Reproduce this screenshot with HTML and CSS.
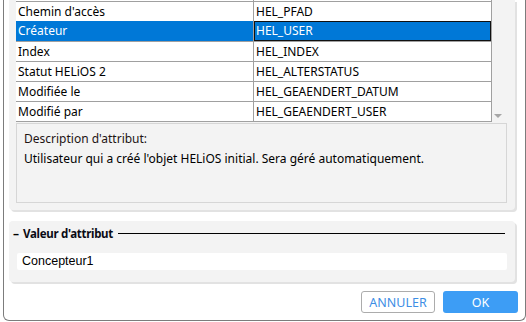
FILE: index.html
```html
<!DOCTYPE html>
<html lang="fr">
<head>
    <meta charset="UTF-8">
    <title>Attribut</title>
    <link rel="stylesheet" href="styles.css">
</head>
<body>
    <div class="window">
        <div class="panel panel-list">
            <div class="list-area">
                <div class="grid">
                    <div class="row row-cut"><span class="cell name"></span><span class="cell field"></span></div>
                    <div class="row"><span class="cell name">Chemin d'accès</span><span class="cell field">HEL_PFAD</span></div>
                    <div class="row selected"><span class="cell name">Créateur</span><span class="cell field">HEL_USER</span></div>
                    <div class="row"><span class="cell name">Index</span><span class="cell field">HEL_INDEX</span></div>
                    <div class="row"><span class="cell name">Statut HELiOS 2</span><span class="cell field">HEL_ALTERSTATUS</span></div>
                    <div class="row"><span class="cell name">Modifiée le</span><span class="cell field">HEL_GEAENDERT_DATUM</span></div>
                    <div class="row"><span class="cell name">Modifié par</span><span class="cell field">HEL_GEAENDERT_USER</span></div>
                </div>
                <div class="scrollbar">
                    <span class="arrow-down"></span>
                </div>
            </div>
            <div class="description">
                <p class="desc-title">Description d'attribut:</p>
                <p class="desc-text">Utilisateur qui a créé l'objet HELiOS initial. Sera géré automatiquement.</p>
            </div>
        </div>

        <div class="panel panel-value">
            <div class="legend">
                <span class="legend-dash">–</span>
                <span class="legend-text">Valeur d'attribut</span>
                <span class="legend-line"></span>
            </div>
            <div class="value-input">Concepteur1</div>
        </div>

        <div class="actions">
            <button class="btn btn-cancel">ANNULER</button>
            <button class="btn btn-ok">OK</button>
        </div>
    </div>
</body>
</html>
```

FILE: styles.css
```css
:root {
    --panel-bg: #f3f3f3;
    --grid-line: #a0a0a0;
    --select-blue: #0078d7;
    --accent: #3d9df5;
}

body {
    margin: 0;
    background-color: white;
    font-family: 'Noto Sans', 'Open Sans', sans-serif;
    font-size: 12px;
    color: #000;
}

.window {
    margin-left: 3px;
    width: 523px;
    height: 321px;
    border-left: 1px solid #7c7c7c;
    border-right: 1px solid #7c7c7c;
    border-bottom: 1px solid #7c7c7c;
    border-bottom-left-radius: 6px;
    border-bottom-right-radius: 6px;
    padding-left: 5px;
    box-sizing: border-box;
}

.panel {
    width: 506px;
    background-color: var(--panel-bg);
    border-radius: 4px;
    box-shadow: 2px 2px 0 #e2e2e2;
    box-sizing: border-box;
}

.panel-list {
    padding: 0 8px 7px 7px;
    border-top-left-radius: 0;
    border-top-right-radius: 0;
}

.list-area {
    display: flex;
}

.grid {
    width: 475px;
    background-color: white;
    border-right: 1px solid var(--grid-line);
}

.row {
    display: flex;
    height: 20px;
    border-bottom: 1px solid var(--grid-line);
    box-sizing: border-box;
}

.row-cut {
    height: 2px;
}

.cell {
    line-height: 19px;
    white-space: nowrap;
    box-sizing: border-box;
}

.cell.name {
    width: 238px;
    padding-left: 2px;
    border-right: 1px solid var(--grid-line);
}

.cell.field {
    flex: 1;
    padding-left: 2px;
}

.row.selected {
    background-color: var(--select-blue);
    color: white;
    height: 21px;
    margin-top: -1px;
}

.row.selected .cell {
    line-height: 20px;
}

.row.selected .cell.field {
    border: 1px solid #111;
    line-height: 18px;
    padding-left: 1px;
}

.scrollbar {
    flex: 1;
    display: flex;
    align-items: flex-end;
    justify-content: center;
    padding-bottom: 4px;
    padding-right: 3px;
}

.arrow-down {
    width: 0;
    height: 0;
    border-left: 4px solid transparent;
    border-right: 4px solid transparent;
    border-top: 4px solid #a6a6a6;
}

.description {
    margin-top: 1px;
    width: 491px;
    height: 80px;
    border: 1px solid #d6d6d6;
    box-sizing: border-box;
    padding: 5px 7px;
}

.description p {
    margin: 0;
    line-height: 20px;
}

.desc-title {
    color: #1e1414;
}

.panel-value {
    margin-top: 11px;
    height: 61px;
    padding: 4px 8px 0 4px;
}

.legend {
    display: flex;
    align-items: center;
    height: 16px;
}

.legend-dash {
    font-weight: bold;
    width: 10px;
}

.legend-text {
    font-weight: bold;
    font-size: 11.5px;
    letter-spacing: -0.3px;
    color: #0a0a14;
}

.legend-line {
    flex: 1;
    height: 1px;
    background-color: #000;
    margin-left: 5px;
    margin-right: 2px;
}

.value-input {
    margin: 12px 0 0 4px;
    background-color: white;
    height: 17px;
    line-height: 17px;
    padding-left: 5px;
    border-radius: 2px;
    font-family: 'Liberation Sans', Arial, sans-serif;
    font-size: 12.5px;
}

.actions {
    display: flex;
    justify-content: flex-end;
    gap: 8px;
    margin-top: 9px;
    padding-right: 7px;
}

.btn {
    height: 22px;
    border-radius: 3px;
    font-family: 'Noto Sans', sans-serif;
    font-size: 12.5px;
    cursor: pointer;
    padding: 0;
}

.btn-cancel {
    width: 74px;
    background-color: white;
    border: 1px solid #acacac;
    color: #3d8ee5;
}

.btn-ok {
    width: 75px;
    background-color: var(--accent);
    border: none;
    color: white;
}
```
